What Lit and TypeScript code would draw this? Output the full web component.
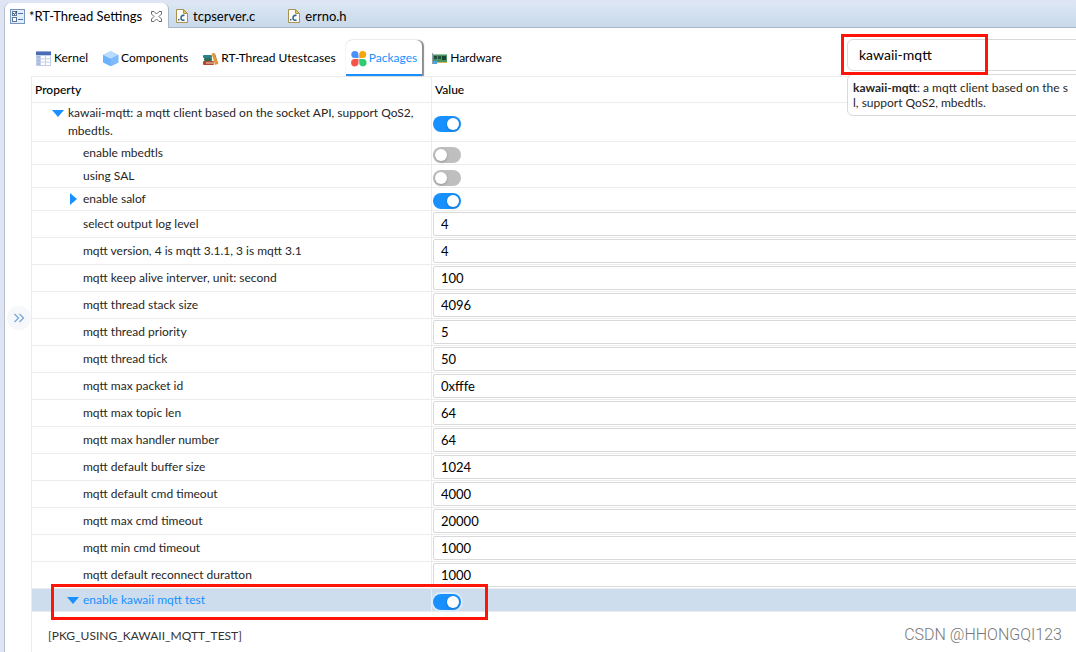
import { LitElement, html, css, svg, nothing } from "lit";
import { customElement, property, state } from "lit/decorators.js";
import { classMap } from "lit/directives/class-map.js";

interface Setting {
  id: string;
  label: string;
  level: number;
  caret?: "open" | "closed";
  on?: boolean;
  value?: string;
  selected?: boolean;
}

const SETTINGS: Setting[] = [
  { id: "pkg", label: "kawaii-mqtt: a mqtt client based on the socket API, support QoS2, mbedtls.", level: 0, caret: "open", on: true },
  { id: "tls", label: "enable mbedtls", level: 1, on: false },
  { id: "sal", label: "using SAL", level: 1, on: false },
  { id: "salof", label: "enable salof", level: 1, caret: "closed", on: true },
  { id: "log", label: "select output log level", level: 1, value: "4" },
  { id: "ver", label: "mqtt version, 4 is mqtt 3.1.1, 3 is mqtt 3.1", level: 1, value: "4" },
  { id: "alive", label: "mqtt keep alive interver, unit: second", level: 1, value: "100" },
  { id: "stack", label: "mqtt thread stack size", level: 1, value: "4096" },
  { id: "prio", label: "mqtt thread priority", level: 1, value: "5" },
  { id: "tick", label: "mqtt thread tick", level: 1, value: "50" },
  { id: "packet", label: "mqtt max packet id", level: 1, value: "0xfffe" },
  { id: "topic", label: "mqtt max topic len", level: 1, value: "64" },
  { id: "handler", label: "mqtt max handler number", level: 1, value: "64" },
  { id: "buffer", label: "mqtt default buffer size", level: 1, value: "1024" },
  { id: "cmd", label: "mqtt default cmd timeout", level: 1, value: "4000" },
  { id: "maxcmd", label: "mqtt max cmd timeout", level: 1, value: "20000" },
  { id: "mincmd", label: "mqtt min cmd timeout", level: 1, value: "1000" },
  { id: "reconnect", label: "mqtt default reconnect duratton", level: 1, value: "1000" },
  { id: "test", label: "enable kawaii mqtt test", level: 1, caret: "open", on: true, selected: true },
];

const kernelIcon = svg`
  <rect x="0" y="0.5" width="15" height="14.5" fill="#c3cee8"/>
  <rect x="0" y="0.5" width="15" height="3.5" fill="#4a6db5"/>
  <g fill="#fff"><rect x="5" y="5" width="4" height="2.3"/><rect x="10" y="5" width="4" height="2.3"/>
  <rect x="5" y="8.3" width="4" height="2.3"/><rect x="10" y="8.3" width="4" height="2.3"/>
  <rect x="5" y="11.6" width="4" height="2.4"/><rect x="10" y="11.6" width="4" height="2.4"/></g>
  <g fill="#a9bae2"><rect x="1" y="5" width="3" height="2.3"/><rect x="1" y="8.3" width="3" height="2.3"/><rect x="1" y="11.6" width="3" height="2.4"/></g>`;

const componentsIcon = svg`
  <path d="M7.7 0.3 15.3 4v7.6L7.7 15.3 0 11.6V4z" fill="#6cb1fb"/>
  <path d="M7.7 0.3 15.3 4 7.7 7.8 0 4z" fill="#b9dcff"/>
  <path d="M7.7 7.8 15.3 4v7.6L7.7 15.3z" fill="#7fbcff"/>`;

const booksIcon = svg`
  <rect x="0" y="4" width="9" height="3" rx="1" fill="#2f7f86"/>
  <rect x="1" y="7" width="8" height="3" rx="1" fill="#2e6f52"/>
  <rect x="0" y="10" width="11" height="4" rx="1" fill="#b0472f"/>
  <rect x="3" y="11.500" width="8" height="1" fill="#ecd9b8"/>
  <path d="M8.6 2.6 11 2 14.6 13 12 14z" fill="#e39a35"/>
  <path d="M11 2l1 .4L15.3 13l-.7.2z" fill="#b9701d"/>`;

const packagesIcon = svg`
  <path d="M3.8 0a3.7 3.7 0 0 1 3.7 3.7V7H3.8a3.5 3.5 0 0 1 0-7z" fill="#4a90fb"/>
  <path d="M11.7 0a3.5 3.5 0 0 1 0 7H8.2V3.7A3.6 3.6 0 0 1 11.7 0z" fill="#f6a609"/>
  <path d="M3.8 8h3.7v3.6A3.7 3.7 0 1 1 3.8 8z" fill="#f4544a"/>
  <path d="M8.2 8h3.5a3.7 3.7 0 1 1-3.5 3.6z" fill="#2fcb73"/>`;

const hardwareIcon = svg`
  <path d="M0 2h1v11H0z" fill="#8fa0ac"/>
  <path d="M1 3h14v8H1z" fill="#4b9364"/>
  <path d="M1 3h14v1H1z" fill="#9cc4a6"/>
  <rect x="2" y="5" width="3" height="3" fill="#1d4f35"/><rect x="6" y="5" width="3" height="3" fill="#215639"/><rect x="10" y="5" width="4" height="4" fill="#1b4731"/>
  <path d="M1 10h4v3H1z" fill="#4da3e0"/>
  <path d="M5 11h10v1H5z" fill="#d2b95a"/>`;

const SECTIONS = [
  { name: "Kernel", icon: kernelIcon },
  { name: "Components", icon: componentsIcon },
  { name: "RT-Thread Utestcases", icon: booksIcon },
  { name: "Packages", icon: packagesIcon },
  { name: "Hardware", icon: hardwareIcon },
];

@customElement("editor-tabs")
export class EditorTabs extends LitElement {
  static styles = css`
    :host { display: block; }
    .bar {
      display: flex;
      height: 24px;
      background: linear-gradient(#dbe7f3, #c8d9ea);
      border-bottom: 1px solid #a9b7cb;
      border-radius: 6px 0 0 0;
    }
    .tab {
      display: flex;
      align-items: center;
      gap: 5px;
      padding: 1px 26px 0 7px;
      border: 0;
      background: none;
      font: 13px/18px Lato, "Open Sans", sans-serif;
      color: #000;
      white-space: nowrap;
    }
    .active {
      gap: 4px;
      height: 25px;
      padding: 1px 6px 0 5px;
      background: #fff;
      border-right: 1px solid #a9b7cb;
      border-radius: 6px 6px 0 0;
    }
    .close { margin-left: 5px; }
    svg { display: block; flex: none; }
  `;

  private file() {
    return html`<svg width="12" height="14" viewBox="0 0 12 14" aria-hidden="true">
      <path d="M.5.5h7l4 4v9H.5z" fill="#fdfdf6" stroke="#a99150"/>
      <path d="M7.5.5v4h4z" fill="#e5bf62" stroke="#b5934a"/>
      <path d="M8.500 6.600C6 5.800 5 7.400 5 8.900s1.200 2.900 3.500 2.200" fill="none" stroke="#2f6595" stroke-width="1.600"/>
      <rect x="2" y="10" width="1.500" height="1.500" fill="#2f6595"/>
    </svg>`;
  }

  render() {
    return html`<div class="bar">
      <button class="tab active">
        <svg width="15" height="15" viewBox="0 0 15 15" aria-hidden="true">
          <rect x=".5" y=".5" width="14" height="14" fill="#e4eefa" stroke="#7795bd"/>
          <rect x="2.500" y="2.500" width="4" height="4" fill="#fff" stroke="#5b7699"/>
          <path d="M3 4l1.500 1.500L7 2" fill="none" stroke="#22364f"/>
          <rect x="2.500" y="8.500" width="4" height="4" fill="#fff" stroke="#5b7699"/>
          <path d="M8 4.500h5M8 10.500h5" stroke="#4d74a8"/>
        </svg>
        *RT-Thread Settings
        <svg class="close" width="11" height="11" viewBox="0 0 11 11" aria-hidden="true">
          <path d="M.5.5h2.500l2.500 2.500L8 .5h2.500V3L8 5.500 10.500 8v2.500H8L5.500 8 3 10.500H.5V8L3 5.500.5 3z" fill="#fff" stroke="#6a6a6a"/>
        </svg>
      </button>
      <button class="tab">${this.file()}tcpserver.c</button>
      <button class="tab">${this.file()}errno.h</button>
    </div>`;
  }
}

@customElement("settings-table")
export class SettingsTable extends LitElement {
  @property({ attribute: false }) rows: Setting[] = [];

  static styles = css`
    :host { display: block; }
    table { width: 100%; border-spacing: 0; table-layout: fixed; }
    .name-col { width: 400px; }
    th, td { padding: 0; border-bottom: 1px solid #ececec; vertical-align: middle; }
    th:first-child, td:first-child { border-right: 1px solid #ececec; }
    th { height: 25px; padding-left: 3px; text-align: left; font-weight: 500; font-size: 12px; line-height: 18px; color: #000; }
    .name { display: flex; align-items: flex-start; gap: 4px; padding: 1px 12px 1px 20px; line-height: 18px; }
    .child { padding-left: 35px; }
    .caret { width: 12px; height: 18px; flex: none; padding: 0; border: 0; background: none; }
    .caret svg { display: block; width: 12px; height: 18px; }
    .switch {
      display: block;
      appearance: none;
      width: 28px;
      height: 16px;
      margin: 5px 0 1px 1px;
      padding: 2px;
      border-radius: 8px;
      background: #bfbfbf;
      box-sizing: border-box;
    }
    .switch::before {
      content: "";
      display: block;
      width: 12px;
      height: 12px;
      border-radius: 6px;
      background: #fff;
      box-shadow: 0 1px 3px rgba(0, 35, 11, 0.25);
    }
    .switch:checked { background: #1890ff; }
    .switch:checked::before { margin-left: 12px; }
    .value {
      display: block;
      width: calc(100% + 20px);
      height: 24px;
      margin: 1px;
      padding: 0 7px;
      box-sizing: border-box;
      border: 1px solid #d9d9d9;
      border-radius: 2px;
      background: #fff;
      font: 13px Lato, "Open Sans", sans-serif;
      color: #000;
    }
    .selected td { background: #cddded; }
    .selected td:first-child { position: relative; color: #1890ff; }
    .selected .switch { box-shadow: 0 0 0 2px #dcecfb; }
    .mark {
      position: absolute;
      z-index: 1;
      top: -5px;
      left: 19px;
      width: calc(100% + 32px);
      height: 30px;
      border: 3px solid #fe1508;
      pointer-events: none;
    }
  `;

  private caret(row: Setting) {
    if (!row.caret) return html`<span class="caret"></span>`;
    const d = row.caret === "open" ? "M0 6h12l-6 7z" : "M3 3l7 6-7 6z";
    return html`<button class="caret" aria-label="Toggle group">
      <svg viewBox="0 0 12 18"><path d=${d} fill="#1890ff"/></svg>
    </button>`;
  }

  render() {
    return html`<table>
      <colgroup><col class="name-col" /><col /></colgroup>
      <thead><tr><th>Property</th><th>Value</th></tr></thead>
      <tbody>
        ${this.rows.map(
          (row) => html`<tr class=${classMap({ selected: !!row.selected })}>
            <td>
              <div class=${classMap({ name: true, child: row.level > 0 })}>
                ${this.caret(row)}<label for=${row.id}>${row.label}</label>
              </div>
              ${row.selected ? html`<div class="mark"></div>` : nothing}
            </td>
            <td>
              ${row.value === undefined
                ? html`<input class="switch" id=${row.id} type="checkbox" .checked=${!!row.on} />`
                : html`<input class="value" id=${row.id} type="text" .value=${row.value} />`}
            </td>
          </tr>`
        )}
      </tbody>
    </table>`;
  }
}

@customElement("app-root")
export class AppRoot extends LitElement {
  @state() private section = "Packages";

  static styles = css`
    :host {
      display: block;
      font: 12px/18px Lato, "Open Sans", sans-serif;
      color: #262626;
    }
    .window {
      position: relative;
      display: flex;
      flex-direction: column;
      box-sizing: border-box;
      min-height: 100vh;
      padding: 3px 0 0 4px;
      background: #dfe4f5;
      overflow: hidden;
    }
    .editor {
      display: flex;
      flex-direction: column;
      flex: 1;
      border-left: 1px solid #b9bfcb;
      border-radius: 6px 0 0 0;
    }
    .body { display: flex; flex: 1; background: #fff; }
    .gutter { width: 26px; flex: none; box-sizing: border-box; padding: 278px 0 0 2px; }
    .expand { display: block; width: 24px; height: 24px; padding: 0; border: 0; border-radius: 12px; background: #f5f7fa; }
    .expand svg { display: block; margin: auto; }
    .main { display: flex; flex-direction: column; flex: 1; min-width: 0; }
    .toolbar { display: flex; height: 48px; border-bottom: 1px solid #ececec; }
    .sections { display: flex; gap: 5px; flex: 1; padding-top: 12px; }
    .section {
      display: flex;
      align-items: center;
      gap: 2px;
      height: 36px;
      padding: 2px 5px 0;
      box-sizing: border-box;
      border: 0;
      border-bottom: 2px solid transparent;
      background: none;
      font: 12px/18px Lato, "Open Sans", sans-serif;
      color: #000;
      white-space: nowrap;
    }
    .section svg { flex: none; margin-top: 2px; }
    .section.current {
      color: #1890ff;
      border-bottom-color: #1890ff;
      border-radius: 6px 6px 0 0;
      background: #fff;
      box-shadow: 2px 0 1px #8c8c8c, 0 0 1px #aaa;
    }
    .search { position: relative; width: 229px; flex: none; padding-top: 11px; }
    .query {
      display: block;
      width: 260px;
      height: 32px;
      box-sizing: border-box;
      padding: 0 11px 2px;
      border: 1px solid #d9d9d9;
      border-radius: 6px;
      background: #fff;
      font: 14px Lato, "Open Sans", sans-serif;
      color: #000;
    }
    .hint {
      position: absolute;
      z-index: 2;
      top: 46px;
      left: 0;
      width: 260px;
      padding: 5px;
      box-sizing: border-box;
      border: 1px solid #d9d9d9;
      border-radius: 6px;
      background: #fff;
      line-height: 15px;
      white-space: nowrap;
    }
    .mark {
      position: absolute;
      z-index: 3;
      top: 6px;
      left: -6px;
      width: 141px;
      height: 35px;
      border: 3px solid #fe1508;
      pointer-events: none;
    }
    .content { flex: 1; border-left: 1px solid #ececec; overflow: hidden; }
    .status { margin: 0; padding: 15px 16px 8px; color: #333; }
    .watermark {
      position: absolute;
      right: 14px;
      bottom: 8px;
      font: 16px/20px Roboto, sans-serif;
      font-weight: 300;
      color: #777;
    }
  `;

  render() {
    return html`<div class="window">
      <div class="editor">
        <editor-tabs></editor-tabs>
        <div class="body">
          <div class="gutter">
            <button class="expand" aria-label="Expand panel">
              <svg width="12" height="10" viewBox="0 0 12 10"><path d="M1.500 1l4 4-4 4M6.500 1l4 4-4 4" fill="none" stroke="#76a9d8" stroke-width="1.300"/></svg>
            </button>
          </div>
          <div class="main">
            <div class="toolbar">
              <nav class="sections">
                ${SECTIONS.map(
                  (s) => html`<button
                    class=${classMap({ section: true, current: s.name === this.section })}
                    @click=${() => (this.section = s.name)}
                  >
                    <svg width="16" height="16" viewBox="0 0 16 16" aria-hidden="true">${s.icon}</svg>${s.name}
                  </button>`
                )}
              </nav>
              <div class="search">
                <input class="query" type="text" aria-label="Search" value="kawaii-mqtt" />
                <div class="hint"><b>kawaii-mqtt</b>: a mqtt client based on the s<br />l, support QoS2, mbedtls.</div>
                <div class="mark"></div>
              </div>
            </div>
            <div class="content">
              <settings-table .rows=${SETTINGS}></settings-table>
              <p class="status">[PKG_USING_KAWAII_MQTT_TEST]</p>
            </div>
          </div>
        </div>
      </div>
      <div class="watermark">CSDN @HHONGQI123</div>
    </div>`;
  }
}
